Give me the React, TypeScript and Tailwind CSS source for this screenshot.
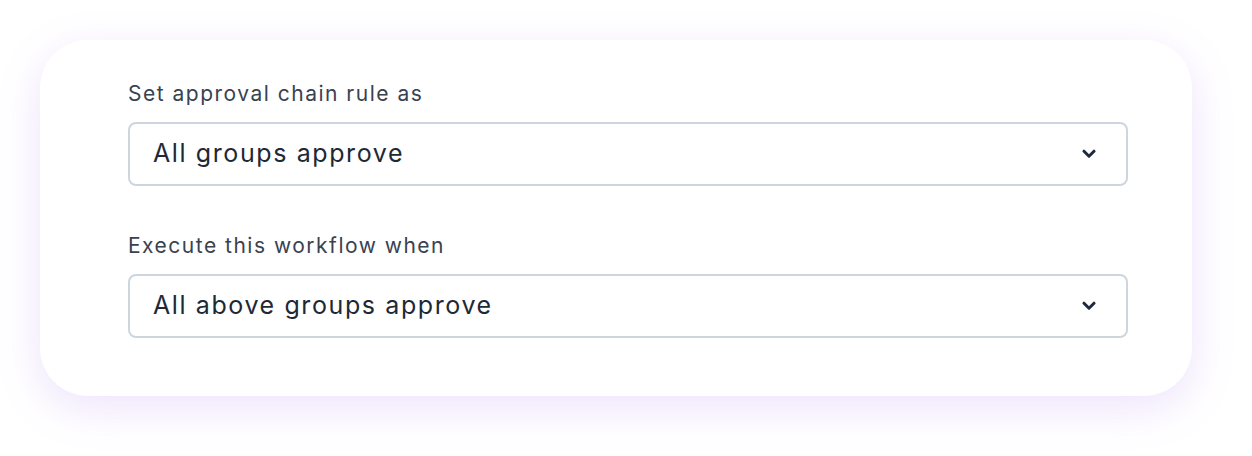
const Chevron = () => (
  <svg width="14" height="10" viewBox="0 0 14 10" fill="none">
    <path d="M2 2.2l5 5 5-5" stroke="#1e293b" strokeWidth="3" strokeLinecap="round" strokeLinejoin="round" />
  </svg>
);

interface FieldProps {
  label: string;
  value: string;
}

const Field = ({ label, value }: FieldProps) => (
  <div className="flex flex-col">
    <label className="text-[21px] leading-[28px] tracking-[1.5px] text-[#39424f]">{label}</label>
    <div className="mt-[14px] h-[64px] flex items-center justify-between rounded-[8px] border-2 border-[#cdd5df] bg-white pl-[23px] pr-[30px]">
      <span className="text-[25px] tracking-[1.6px] text-[#1e2936]">{value}</span>
      <Chevron />
    </div>
  </div>
);

export default function App() {
  return (
    <div className="w-[1252px] h-[456px] bg-white pt-[40px] pl-[40px]" style={{ fontFamily: 'Inter, "Noto Sans", sans-serif' }}>
      <div className="w-[1152px] h-[356px] rounded-[48px] bg-white shadow-[0_12px_44px_rgba(160,100,240,0.18)] pt-[40px] pl-[88px]">
        <div className="flex flex-col gap-[46px] w-[1000px]">
          <Field label="Set approval chain rule as" value="All groups approve" />
          <Field label="Execute this workflow when" value="All above groups approve" />
        </div>
      </div>
    </div>
  );
}
